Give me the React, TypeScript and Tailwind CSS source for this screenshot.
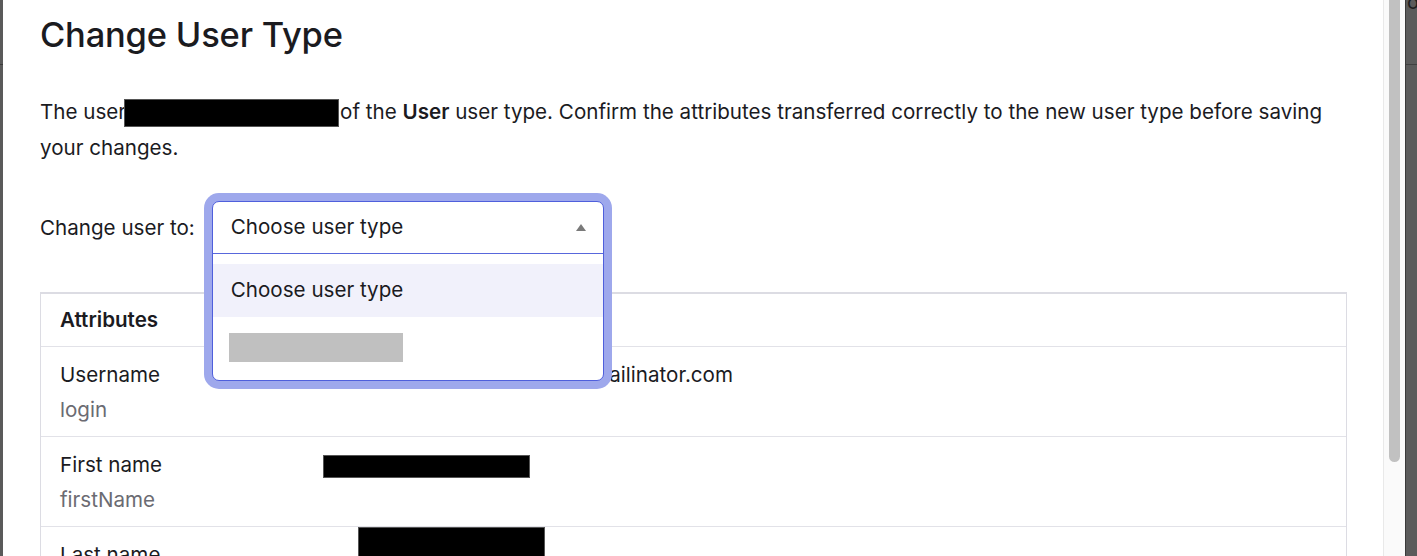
import React from 'react';

const rows = [
  { label: 'Username', attr: 'login' },
  { label: 'First name', attr: 'firstName' },
  { label: 'Last name', attr: 'lastName' },
];

const Redacted = ({ className }: { className: string }) => (
  <span className={`inline-block bg-black border border-[#555] align-middle ${className}`} />
);

export default function App() {
  return (
    <div
      className="flex h-[556px] w-[1417px] overflow-hidden bg-white text-[#1b1b1f]"
      style={{ fontFamily: 'Inter, "Noto Sans", sans-serif' }}
    >
      {/* backdrop edge, left */}
      <div className="w-[3px] shrink-0 bg-[#5a5a5a]">
        <div className="h-[65px] border-b border-[#3c3c3c]" />
      </div>

      {/* modal */}
      <main className="flex-1 pl-[37px] pr-[36px] pt-[15px] text-[20.6px]">
        <h1 className="text-[34.5px] font-medium leading-[40px] tracking-[-0.2px]">Change User Type</h1>

        <p className="mt-[39px] leading-[36px]">
          The user
          <Redacted className="-ml-[2px] mr-[1px] h-[28px] w-[215px]" />
          of the <b className="font-semibold">User</b> user type. Confirm the attributes transferred correctly to the new user type before saving
          <br />
          your changes.
        </p>

        <div className="mt-[35px] flex items-center gap-[17px]">
          <span>Change user to:</span>
          <div className="relative h-[54px] w-[392px]">
            <div className="absolute left-0 top-0 z-10 flex w-full flex-col rounded-[7px] border-[1.5px] border-[#4f5fdc] bg-white ring-8 ring-[#9ea8ec]">
              <div className="flex h-[52px] items-center justify-between border-b-[1.5px] border-[#5867dc] pl-[18px] pr-[17px]">
                <span>Choose user type</span>
                <span className="h-0 w-0 border-x-[5px] border-b-[7px] border-x-transparent border-b-[#7a7a7a]" />
              </div>
              <ul className="py-[10px]">
                <li className="flex h-[53px] items-center bg-[#f1f1fb] pl-[18px]">Choose user type</li>
                <li className="flex h-[53px] items-start pl-[16px] pt-[16px]">
                  <span className="h-[29px] w-[174px] bg-[#c0c0c0]" />
                </li>
              </ul>
            </div>
          </div>
        </div>

        <div className="mt-[37px] border border-t-2 border-[#dcdce3]">
          <div className="flex h-[53px] items-center border-b border-[#e2e2e8] pl-[19px] font-semibold">Attributes</div>
          {rows.map((r, i) => (
            <div key={r.label} className="flex h-[90px] border-b border-[#e2e2e8]">
              <div className="w-[262px] shrink-0 pl-[19px] pt-[10px] leading-[35px]">
                <div>{r.label}</div>
                <div className="text-[#6b6b72]">{r.attr}</div>
              </div>
              <div className="flex-1 leading-[35px]">
                {i === 0 && (
                  <div className="ml-[20px] mt-[10px] flex w-[410px] justify-end overflow-hidden whitespace-nowrap">
                    <span className="shrink-0">qa.changeusertype.automation01@mailinator.com</span>
                  </div>
                )}
                {i === 1 && (
                  <div className="ml-[20px] pt-[10px]">
                    <Redacted className="h-[23px] w-[207px]" />
                  </div>
                )}
                {i === 2 && <Redacted className="ml-[55px] h-[32px] w-[187px] align-top" />}
              </div>
            </div>
          ))}
        </div>
      </main>

      {/* scrollbar */}
      <div className="w-[22px] shrink-0 border-l border-[#e9e9e9] bg-[#fafafa] pl-[5px]">
        <div className="h-[462px] w-[11px] rounded-b-full bg-[#c1c1c1]" />
      </div>

      {/* backdrop edge, right */}
      <div className="relative w-[12px] shrink-0 overflow-hidden border-l border-[#3a3a3a] bg-[#5b5b5b]">
        <span className="absolute -top-[13px] left-[1px] text-[20px] text-[#1e1e1e]">o</span>
        <div className="h-[65px] border-b border-[#404040]" />
      </div>
    </div>
  );
}
